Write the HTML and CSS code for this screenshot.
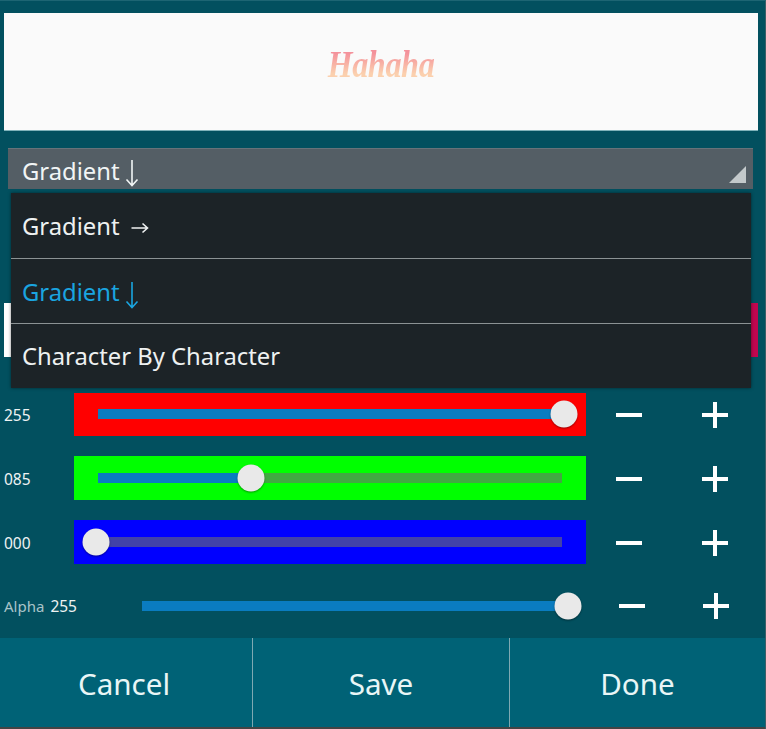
FILE: index.html
```html
<!DOCTYPE html>
<html lang="en">
<head>
<meta charset="utf-8">
<title>Gradient text</title>
<link rel="stylesheet" href="styles.css">
</head>
<body>
<div class="app">
  <main class="content">
    <section class="preview"><span class="preview-text">Hahaha</span></section>
    <div class="spinner">
      <span class="label">Gradient</span>
      <svg class="arrow-down" width="14" height="28" viewBox="0 0 14 28"><path d="M7 1V26M1.5 20.5L7 26.5L12.5 20.5" fill="none" stroke="currentColor" stroke-width="1.6"/></svg>
      <span class="corner"></span>
    </div>
    <div class="swatches"><span class="swatch-start"></span><span class="swatch-end"></span></div>
    <div class="sliders">
      <div class="row">
        <span class="value">255</span>
        <div class="band red"><div class="track"><div class="fill fill-full"></div><span class="thumb thumb-full"></span></div></div>
        <div class="steppers">
          <svg width="28" height="28" viewBox="0 0 28 28"><path d="M1 14H27" stroke="#fff" stroke-width="4"/></svg>
          <svg width="28" height="28" viewBox="0 0 28 28"><path d="M1 14H27M14 1V27" stroke="#fff" stroke-width="4"/></svg>
        </div>
      </div>
      <div class="row row-low">
        <span class="value">085</span>
        <div class="band green tall"><div class="track"><div class="fill" style="width:33%"></div><span class="thumb" style="left:33%"></span></div></div>
        <div class="steppers">
          <svg width="28" height="28" viewBox="0 0 28 28"><path d="M1 14H27" stroke="#fff" stroke-width="4"/></svg>
          <svg width="28" height="28" viewBox="0 0 28 28"><path d="M1 14H27M14 1V27" stroke="#fff" stroke-width="4"/></svg>
        </div>
      </div>
      <div class="row row-low">
        <span class="value">000</span>
        <div class="band blue tall"><div class="track"><span class="thumb thumb-zero"></span></div></div>
        <div class="steppers">
          <svg width="28" height="28" viewBox="0 0 28 28"><path d="M1 14H27" stroke="#fff" stroke-width="4"/></svg>
          <svg width="28" height="28" viewBox="0 0 28 28"><path d="M1 14H27M14 1V27" stroke="#fff" stroke-width="4"/></svg>
        </div>
      </div>
      <div class="row alpha-row">
        <span class="value"><span class="alpha-word">Alpha</span>255</span>
        <div class="alpha-slider"><div class="alpha-track"><span class="thumb thumb-alpha"></span></div></div>
        <div class="steppers alpha-steppers">
          <svg width="28" height="28" viewBox="0 0 28 28"><path d="M1 14H27" stroke="#fff" stroke-width="4"/></svg>
          <svg width="28" height="28" viewBox="0 0 28 28"><path d="M1 14H27M14 1V27" stroke="#fff" stroke-width="4"/></svg>
        </div>
      </div>
    </div>
  </main>
  <footer class="footer">
    <button class="action action-first">Cancel</button>
    <button class="action">Save</button>
    <button class="action">Done</button>
  </footer>
  <ul class="menu">
    <li class="item"><span>Gradient</span><svg class="arrow-right" width="18" height="12" viewBox="0 0 18 12"><path d="M0.5 6H16.5M11.5 1.5L16.5 6L11.5 10.5" fill="none" stroke="currentColor" stroke-width="1.6"/></svg></li>
    <li class="item selected"><span>Gradient</span><svg class="arrow-menu" width="14" height="28" viewBox="0 0 14 28"><path d="M7 1V26M1.5 20.5L7 26.5L12.5 20.5" fill="none" stroke="currentColor" stroke-width="1.6"/></svg></li>
    <li class="item"><span>Character By Character</span></li>
  </ul>
</div>
</body>
</html>
```
FILE: styles.css
```css
* { box-sizing: border-box; }
html, body { margin: 0; padding: 0; }
body {
  width: 766px;
  height: 729px;
  overflow: hidden;
  background: #02505f;
  font-family: "Noto Sans", "Open Sans", sans-serif;
  color: #f1f5f5;
}
.app {
  position: relative;
  width: 766px;
  height: 729px;
  display: flex;
  flex-direction: column;
  border-top: 1px solid #1d6573;
  border-right: 1px solid #3a5f68;
}
.content { flex: 1; padding-top: 12px; }
.preview {
  margin: 0 7px 0 4px;
  height: 118px;
  background: #fafafa;
  border-bottom: 1px solid #7fb2ba;
  display: flex;
  align-items: center;
  justify-content: center;
}
.preview-text {
  margin: 0 0 15px 0;
  font-family: "Liberation Serif", serif;
  font-style: italic;
  font-weight: 700;
  font-size: 38px;
  line-height: 44px;
  letter-spacing: -0.5px;
  transform: scaleX(0.85);
  background: linear-gradient(180deg, #f4919b 25%, #fbd0ae 72%);
  -webkit-background-clip: text;
  background-clip: text;
  color: transparent;
}
.spinner {
  position: relative;
  margin: 17px 12px 0 8px;
  height: 41px;
  padding: 3px 0 0 14px;
  background: #545e65;
  border-top: 1px solid #66737a;
  display: flex;
  align-items: flex-start;
  gap: 5px;
  font-size: 23.8px;
  line-height: 38px;
}
.arrow-down { margin-top: 7px; }
.corner {
  position: absolute;
  right: 7px;
  bottom: 6px;
  width: 17px;
  height: 17px;
  background: #c3c9cb;
  clip-path: polygon(100% 0, 100% 100%, 0 100%);
}
.swatches {
  margin: 114px 7px 0 4px;
  height: 54px;
  display: flex;
  justify-content: space-between;
  background: #fff;
}
.swatch-start { width: 50%; background: #fff; }
.swatch-end { width: 50%; background: #c0064f; }
.sliders {
  margin-top: 36px;
  display: flex;
  flex-direction: column;
  gap: 20px;
}
.row {
  display: flex;
  align-items: center;
}
.row-low .value,
.row-low .steppers { margin-top: 2px; }
.value {
  width: 74px;
  padding-left: 4px;
  font-size: 15.5px;
  color: #eef3f3;
}
.band {
  width: 512px;
  height: 43px;
  padding: 16px 24px;
}
.tall { height: 44px; padding-top: 17px; }
.red { background: #ff0000; }
.green { background: #00ff00; }
.blue { background: #0000ff; }
.track {
  position: relative;
  height: 10px;
  background: rgba(110, 110, 110, 0.6);
}
.fill { height: 100%; background: #0a7cc0; }
.fill-full { width: 100%; }
.thumb {
  position: absolute;
  top: 50%;
  width: 27px;
  height: 27px;
  border-radius: 50%;
  background: #e9e9e9;
  box-shadow: 0 1px 2px rgba(0, 0, 0, 0.4);
  transform: translate(-50%, -50%);
}
.thumb-full { left: calc(100% + 1.5px); }
.thumb-zero { left: -2px; }
.steppers {
  margin-left: 29px;
  display: flex;
  gap: 58px;
}
.alpha-row { height: 44px; }
.alpha-row .value { white-space: nowrap; }
.alpha-word { color: #a9c4c9; font-size: 15px; margin-right: 6px; }
.alpha-slider { width: 439px; margin-left: 68px; }
.alpha-track { position: relative; height: 10px; background: #0a7cc0; width: 426px; }
.thumb-alpha { left: 100%; }
.alpha-steppers { margin-left: 37px; gap: 56px; }
.footer {
  display: grid;
  grid-template-columns: 253px 257px 1fr;
  height: 91px;
  background: #006276;
  border-bottom: 2px solid #444;
}
.action {
  margin: 0;
  padding: 2px 0 0;
  border: 0;
  border-right: 1px solid #7fa9b2;
  background: transparent;
  color: #e9f6f6;
  font: inherit;
  font-size: 29.6px;
}
.action-first { padding-right: 4px; }
.action:last-child { border-right: 0; }
.menu {
  position: absolute;
  top: 192px;
  left: 11px;
  width: 740px;
  margin: 0;
  padding: 0;
  list-style: none;
  background: #1c2327;
  box-shadow: 0 0 3px rgba(0, 0, 0, 0.5);
}
.item {
  height: 65px;
  padding: 2px 0 0 11px;
  display: flex;
  align-items: center;
  gap: 11px;
  font-size: 23.8px;
  color: #eef1f1;
  border-bottom: 1px solid #8b9294;
}
.item:first-child { height: 66px; padding-top: 1px; }
.item:last-child { height: 64px; border-bottom: 0; padding-top: 0; }
.selected { color: #1aa5e0; gap: 5px; }
.arrow-right { margin-top: 4px; }
.arrow-menu { margin-top: 6px; }
```
